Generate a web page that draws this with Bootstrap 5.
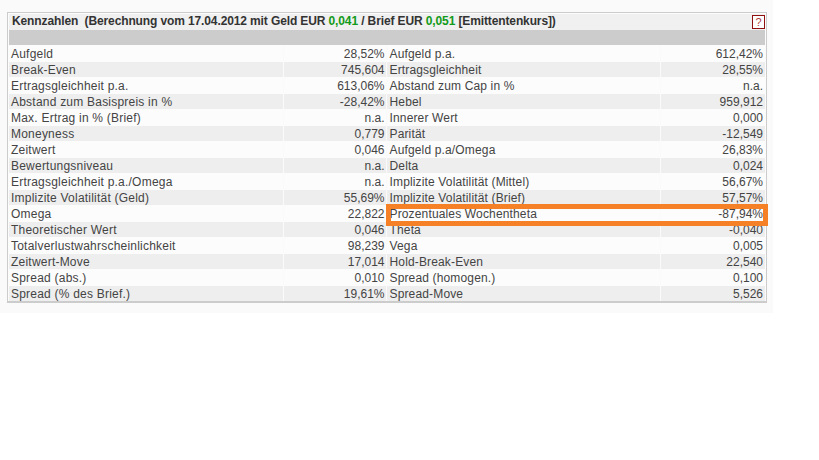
<!DOCTYPE html>
<html lang="de"><head><meta charset="utf-8"><title>Kennzahlen</title>
<link href="https://cdn.jsdelivr.net/npm/bootstrap@5.3.0/dist/css/bootstrap.min.css" rel="stylesheet">
<style>
html,body{background:#fff;margin:0}
body{font-family:"Liberation Sans",Arial,sans-serif;font-size:12px;color:#444;height:460px;overflow:hidden}
.sheet{width:773px;height:313px;background:#fafafa;padding:12px 6px 0 7px}
.panel-box{position:relative;width:760px;height:291px;border:1px solid #ccc;border-width:1px 1px 2px 1px;background:#fcfcfc;padding:1px}
.panel-head{height:16px;background:#f0f0f0;line-height:15px;padding:0 0 0 3px;font-weight:700;color:#333;font-size:12px;white-space:pre;letter-spacing:-.12px}
.grn{color:#129a1a}
.help-btn{width:13px;height:14px;border:1px solid #901010;background:#fff;color:#b04040;font-weight:400;font-size:11px;line-height:12px;text-align:center;margin-top:1px;letter-spacing:0}
.band{height:15px;background:#ccc}
.kz-table{table-layout:fixed;width:756px;margin:0;border-collapse:collapse;--bs-table-bg:transparent;--bs-table-color:#444}
.kz-table td{padding:1px 1px 0 2px;line-height:14px;font-size:12px;border:0;color:#444;white-space:nowrap;background:transparent;vertical-align:middle;letter-spacing:.22px}
.kz-table tr:nth-child(odd) td{height:17px}
.kz-table tr:nth-child(even) td{height:15px;background:#eee}
.kz-table td.v{text-align:right;border-left:1px solid #fafafa;letter-spacing:0}
.kz-table td.l2{padding-left:3px;border-left:1px solid #fafafa;letter-spacing:.15px}
.kz-table td.v2{padding-right:2px}
.mark-box{position:absolute;left:378px;top:191px;width:382px;height:22px;border:5px solid #f58025}
</style></head><body>
<div class="sheet">
<div class="panel-box">
<div class="panel-head d-flex justify-content-between"><span>Kennzahlen  (Berechnung vom 17.04.2012 mit Geld EUR <span class="grn">0,041</span> / Brief EUR <span class="grn">0,051</span> [Emittentenkurs])</span><span class="help-btn">?</span></div>
<div class="band"></div>
<table class="table kz-table"><colgroup><col style="width:274px"><col style="width:103px"><col style="width:274px"><col style="width:105px"></colgroup><tbody>
<tr><td>Aufgeld</td><td class="v">28,52%</td><td class="l2">Aufgeld p.a.</td><td class="v v2">612,42%</td></tr>
<tr><td>Break-Even</td><td class="v">745,604</td><td class="l2">Ertragsgleichheit</td><td class="v v2">28,55%</td></tr>
<tr><td>Ertragsgleichheit p.a.</td><td class="v">613,06%</td><td class="l2">Abstand zum Cap in %</td><td class="v v2">n.a.</td></tr>
<tr><td>Abstand zum Basispreis in %</td><td class="v">-28,42%</td><td class="l2">Hebel</td><td class="v v2">959,912</td></tr>
<tr><td>Max. Ertrag in % (Brief)</td><td class="v">n.a.</td><td class="l2">Innerer Wert</td><td class="v v2">0,000</td></tr>
<tr><td>Moneyness</td><td class="v">0,779</td><td class="l2">Parität</td><td class="v v2">-12,549</td></tr>
<tr><td>Zeitwert</td><td class="v">0,046</td><td class="l2">Aufgeld p.a/Omega</td><td class="v v2">26,83%</td></tr>
<tr><td>Bewertungsniveau</td><td class="v">n.a.</td><td class="l2">Delta</td><td class="v v2">0,024</td></tr>
<tr><td>Ertragsgleichheit p.a./Omega</td><td class="v">n.a.</td><td class="l2">Implizite Volatilität (Mittel)</td><td class="v v2">56,67%</td></tr>
<tr><td>Implizite Volatilität (Geld)</td><td class="v">55,69%</td><td class="l2">Implizite Volatilität (Brief)</td><td class="v v2">57,57%</td></tr>
<tr><td>Omega</td><td class="v">22,822</td><td class="l2">Prozentuales Wochentheta</td><td class="v v2">-87,94%</td></tr>
<tr><td>Theoretischer Wert</td><td class="v">0,046</td><td class="l2">Theta</td><td class="v v2">-0,040</td></tr>
<tr><td>Totalverlustwahrscheinlichkeit</td><td class="v">98,239</td><td class="l2">Vega</td><td class="v v2">0,005</td></tr>
<tr><td>Zeitwert-Move</td><td class="v">17,014</td><td class="l2">Hold-Break-Even</td><td class="v v2">22,540</td></tr>
<tr><td>Spread (abs.)</td><td class="v">0,010</td><td class="l2">Spread (homogen.)</td><td class="v v2">0,100</td></tr>
<tr><td>Spread (% des Brief.)</td><td class="v">19,61%</td><td class="l2">Spread-Move</td><td class="v v2">5,526</td></tr>
</tbody></table>
<div class="mark-box"></div>
</div></div>
</body></html>
